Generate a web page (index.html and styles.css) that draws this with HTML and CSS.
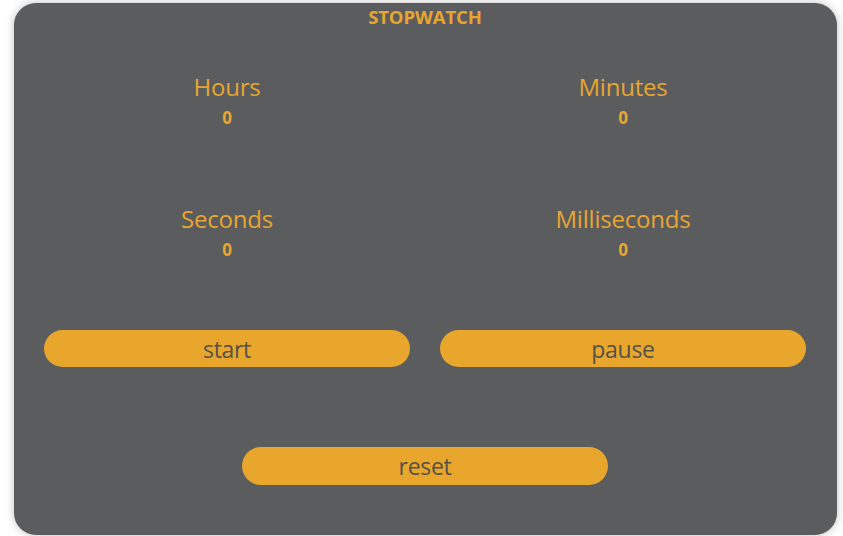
FILE: index.html
```html
<!DOCTYPE html>
<html>
<head>
<meta charset="utf-8">
<link rel="stylesheet" href="styles.css">
</head>
<body>
<div class="card">
  <h1 class="title">STOPWATCH</h1>
  <div class="grid">
    <div class="unit"><div class="label">Hours</div><div class="value">0</div></div>
    <div class="unit"><div class="label">Minutes</div><div class="value">0</div></div>
    <div class="unit"><div class="label">Seconds</div><div class="value">0</div></div>
    <div class="unit"><div class="label">Milliseconds</div><div class="value">0</div></div>
  </div>
  <div class="buttons">
    <button class="btn">start</button>
    <button class="btn">pause</button>
  </div>
  <div class="reset-row">
    <button class="btn">reset</button>
  </div>
</div>
</body>
</html>
```

FILE: styles.css
```css
html, body {
  margin: 0;
  padding: 0;
  background: #ffffff;
}
body {
  font-family: "Open Sans", "Noto Sans", sans-serif;
  padding: 3px 6px 1px 14px;
}
.card {
  height: 532px;
  box-sizing: border-box;
  background: #5b5c5e;
  border-radius: 22px;
  box-shadow: 0 0 8px rgba(0, 0, 0, 0.25);
  padding: 4px 16px 0 15px;
  color: #e8a530;
}
.title {
  margin: 0;
  font-size: 18.5px;
  line-height: 20px;
  font-weight: 700;
  text-align: center;
  letter-spacing: -0.1px;
}
.grid {
  display: grid;
  grid-template-columns: 1fr 1fr;
  row-gap: 71px;
  margin-top: 45px;
}
.unit {
  text-align: center;
}
.label {
  font-size: 24px;
  line-height: 30px;
  letter-spacing: -0.2px;
}
.value {
  font-size: 17px;
  line-height: 30px;
  font-weight: 700;
  padding-top: 1px;
}
.buttons {
  display: grid;
  grid-template-columns: 1fr 1fr;
  margin-top: 65px;
}
.btn {
  display: block;
  margin: 0 15px;
  height: 37px;
  border: none;
  border-radius: 19px;
  background: #e8a62c;
  color: #55514a;
  font-family: "Open Sans", "Noto Sans", sans-serif;
  font-size: 23px;
  line-height: 37px;
  padding: 1px 0 0;
  box-sizing: border-box;
  letter-spacing: -0.3px;
}
.reset-row {
  display: flex;
  justify-content: center;
  margin-top: 80px;
}
.reset-row .btn {
  width: 366px;
  height: 38px;
  margin: 0;
}
```
